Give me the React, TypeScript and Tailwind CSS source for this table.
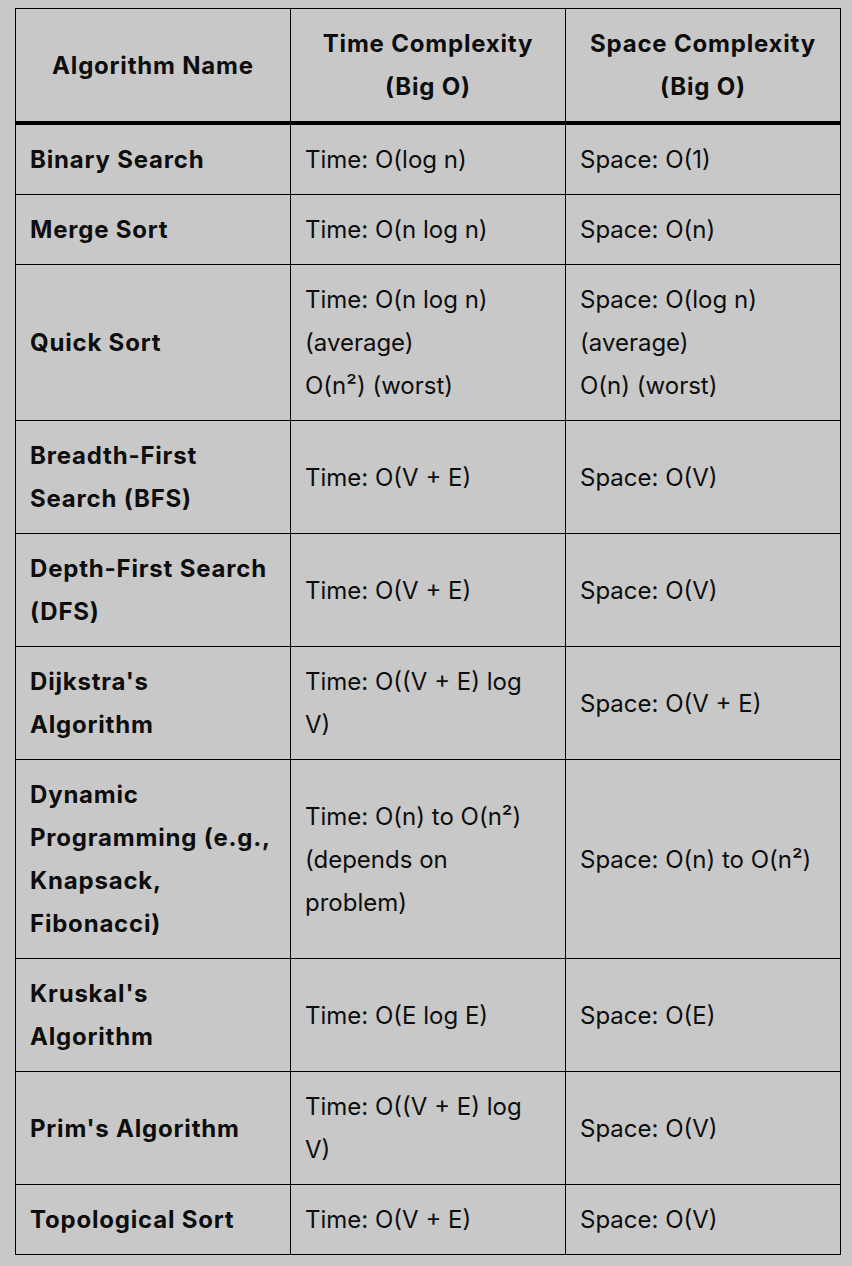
const rows: [string, string[], string[]][] = [
  ["Binary Search", ["Time: O(log n)"], ["Space: O(1)"]],
  ["Merge Sort", ["Time: O(n log n)"], ["Space: O(n)"]],
  ["Quick Sort", ["Time: O(n log n)", "(average)", "O(n²) (worst)"], ["Space: O(log n)", "(average)", "O(n) (worst)"]],
  ["Breadth-First Search (BFS)", ["Time: O(V + E)"], ["Space: O(V)"]],
  ["Depth-First Search (DFS)", ["Time: O(V + E)"], ["Space: O(V)"]],
  ["Dijkstra's Algorithm", ["Time: O((V + E) log V)"], ["Space: O(V + E)"]],
  ["Dynamic Programming (e.g., Knapsack, Fibonacci)", ["Time: O(n) to O(n²)", "(depends on problem)"], ["Space: O(n) to O(n²)"]],
  ["Kruskal's Algorithm", ["Time: O(E log E)"], ["Space: O(E)"]],
  ["Prim's Algorithm", ["Time: O((V + E) log V)"], ["Space: O(V)"]],
  ["Topological Sort", ["Time: O(V + E)"], ["Space: O(V)"]],
];

export default function App() {
  return (
    <div className="min-h-screen bg-[#c8c8c8] pt-[8px] pl-[15px] text-[#0d0d0d] [font-family:Inter,'Noto_Sans',sans-serif]">
      <table className="w-[826px] table-fixed border-collapse text-[24px] leading-[43px]">
        <thead>
          <tr className="border-b-[4px] border-black">
            <th className="w-[275px] border border-black px-[14px] py-[13px] text-center font-bold tracking-[0.8px]">Algorithm Name</th>
            <th className="w-[275px] border border-black px-[14px] py-[13px] text-center font-bold tracking-[0.8px]">Time Complexity (Big O)</th>
            <th className="border border-black px-[14px] py-[13px] text-center font-bold tracking-[0.8px]">Space Complexity (Big O)</th>
          </tr>
        </thead>
        <tbody>
          {rows.map(([name, time, space]) => (
            <tr key={name}>
              <td className="border border-black px-[14px] py-[13px] font-bold tracking-[0.8px]">{name}</td>
              <td className="border border-black px-[14px] py-[13px]">
                {time.map((t) => (
                  <div key={t}>{t}</div>
                ))}
              </td>
              <td className="border border-black px-[14px] py-[13px]">
                {space.map((s) => (
                  <div key={s}>{s}</div>
                ))}
              </td>
            </tr>
          ))}
        </tbody>
      </table>
    </div>
  );
}
